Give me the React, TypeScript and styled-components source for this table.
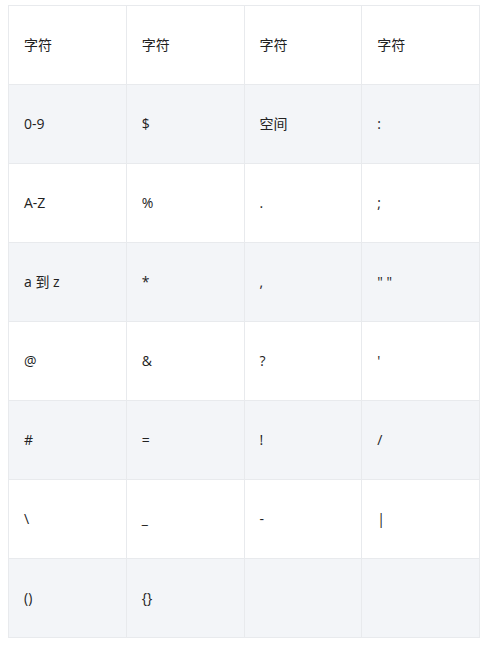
import styled, { createGlobalStyle } from 'styled-components'

const GlobalStyle = createGlobalStyle`
    body {
        margin: 0;
        background: #ffffff;
        font-family: 'Open Sans', 'Noto Sans CJK SC', sans-serif;
    }
`

const SDiv_Page = styled.div`
    padding: 5px 7px 8px 8px;
`

const STable = styled.table`
    width: 472px;
    border-collapse: collapse;
    table-layout: fixed;
    border: 1px solid #e8eaed;
`

const STr = styled.tr<{ $striped?: boolean }>`
    background-color: ${(p) => (p.$striped ? '#f3f5f8' : '#ffffff')};
`

const STd = styled.td`
    height: 18px;
    padding: 30px 15px;
    border: 1px solid #e8eaed;
    font-size: 14px;
    line-height: 18px;
    color: #222222;
    vertical-align: middle;
    white-space: nowrap;
`

const rows: string[][] = [
    ['字符', '字符', '字符', '字符'],
    ['0-9', '$', '空间', ':'],
    ['A-Z', '%', '.', ';'],
    ['a 到 z', '*', ',', '" "'],
    ['@', '&', '?', "'"],
    ['#', '=', '!', '/'],
    ['\\', '_', '-', '|'],
    ['()', '{}', '', ''],
]

export default function App() {
    return (
        <>
            <GlobalStyle />
            <SDiv_Page>
                <STable>
                    <tbody>
                        {rows.map((row, i) => (
                            <STr key={i} $striped={i % 2 === 1}>
                                {row.map((cell, j) => (
                                    <STd key={j}>{cell}</STd>
                                ))}
                            </STr>
                        ))}
                    </tbody>
                </STable>
            </SDiv_Page>
        </>
    )
}
